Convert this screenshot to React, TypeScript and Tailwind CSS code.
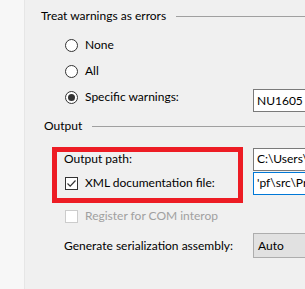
import React from "react";

function Radio({ checked }: { checked?: boolean }) {
  return (
    <span className="flex h-[13px] w-[13px] items-center justify-center rounded-full border border-[#333333] bg-white">
      {checked && <span className="h-[7px] w-[7px] rounded-full bg-[#333333]" />}
    </span>
  );
}

function Check({ checked, disabled }: { checked?: boolean; disabled?: boolean }) {
  return (
    <span
      className={`flex h-[13px] w-[13px] items-center justify-center border bg-white ${disabled ? "border-[#cccccc]" : "border-[#333333]"}`}
    >
      {checked && (
        <svg width="11" height="11" viewBox="0 0 11 11">
          <path d="M1.5 5.5 L4.2 8.2 L9.5 2.5" fill="none" stroke="#333333" strokeWidth="1.2" />
        </svg>
      )}
    </span>
  );
}

function Group({ title, pl }: { title: string; pl: string }) {
  return (
    <div className={`flex h-[20px] items-center ${pl}`}>
      <span>{title}</span>
      <div className="ml-[10px] h-px flex-1 bg-[#a0a0a0]" />
    </div>
  );
}

function TextBox({ value, focused }: { value: string; focused?: boolean }) {
  return (
    <div
      className={`flex h-[23px] w-[120px] shrink-0 items-center border bg-white pl-[3px] ${focused ? "border-[#0078d7]" : "border-[#7a7a7a]"}`}
    >
      {value}
    </div>
  );
}

export default function App() {
  const radios = [
    { label: "None", checked: false },
    { label: "All", checked: false },
    { label: "Specific warnings:", checked: true },
  ];

  return (
    <div className="flex h-[289px] w-[305px] overflow-hidden bg-[#f0f0f0] font-['Lato',sans-serif] text-[12px] leading-none text-black">
      <div className="w-[25px] shrink-0 border-r border-[#e6e6e6] bg-[#f7f7f7]" />
      <div className="relative flex min-w-0 flex-1 flex-col pt-[6px]">
        <Group title="Treat warnings as errors" pl="pl-[16px]" />

        <div className="mt-[6px] flex flex-col">
          {radios.map((r) => (
            <div key={r.label} className="flex h-[26px] items-center">
              <div className="flex w-[228px] shrink-0 items-center gap-[7px] pl-[40px]">
                <Radio checked={r.checked} />
                <span>{r.label}</span>
              </div>
              {r.checked && (
                <div className="mt-[7px]">
                  <TextBox value="NU1605" />
                </div>
              )}
            </div>
          ))}
        </div>

        <div className="mt-[6px]">
          <Group title="Output" pl="pl-[19px]" />
        </div>

        <div className="mt-[11px] flex h-[24px] items-center">
          <div className="w-[228px] shrink-0 pl-[39px]">Output path:</div>
          <TextBox value="C:\Users\" />
        </div>
        <div className="flex h-[24px] items-center">
          <div className="flex w-[228px] shrink-0 items-center gap-[7px] pl-[40px]">
            <Check checked />
            <span>XML documentation file:</span>
          </div>
          <TextBox value="'pf\src\Pr" focused />
        </div>

        <div className="mt-[9px] flex h-[24px] items-center">
          <div className="flex w-[228px] shrink-0 items-center gap-[7px] pl-[40px] text-[#a0a0a0]">
            <Check disabled />
            <span>Register for COM interop</span>
          </div>
        </div>

        <div className="mt-[5px] flex h-[25px] items-center">
          <div className="w-[228px] shrink-0 pl-[39px]">Generate serialization assembly:</div>
          <div className="flex h-[25px] w-[120px] shrink-0 items-center border border-[#adadad] bg-[#e1e1e1] pl-[4px]">
            Auto
          </div>
        </div>

        {/* highlight annotation */}
        <div className="pointer-events-none absolute left-[27px] top-[147px] h-[56px] w-[191px] border-[5px] border-[#ed1c24]" />
      </div>
    </div>
  );
}
